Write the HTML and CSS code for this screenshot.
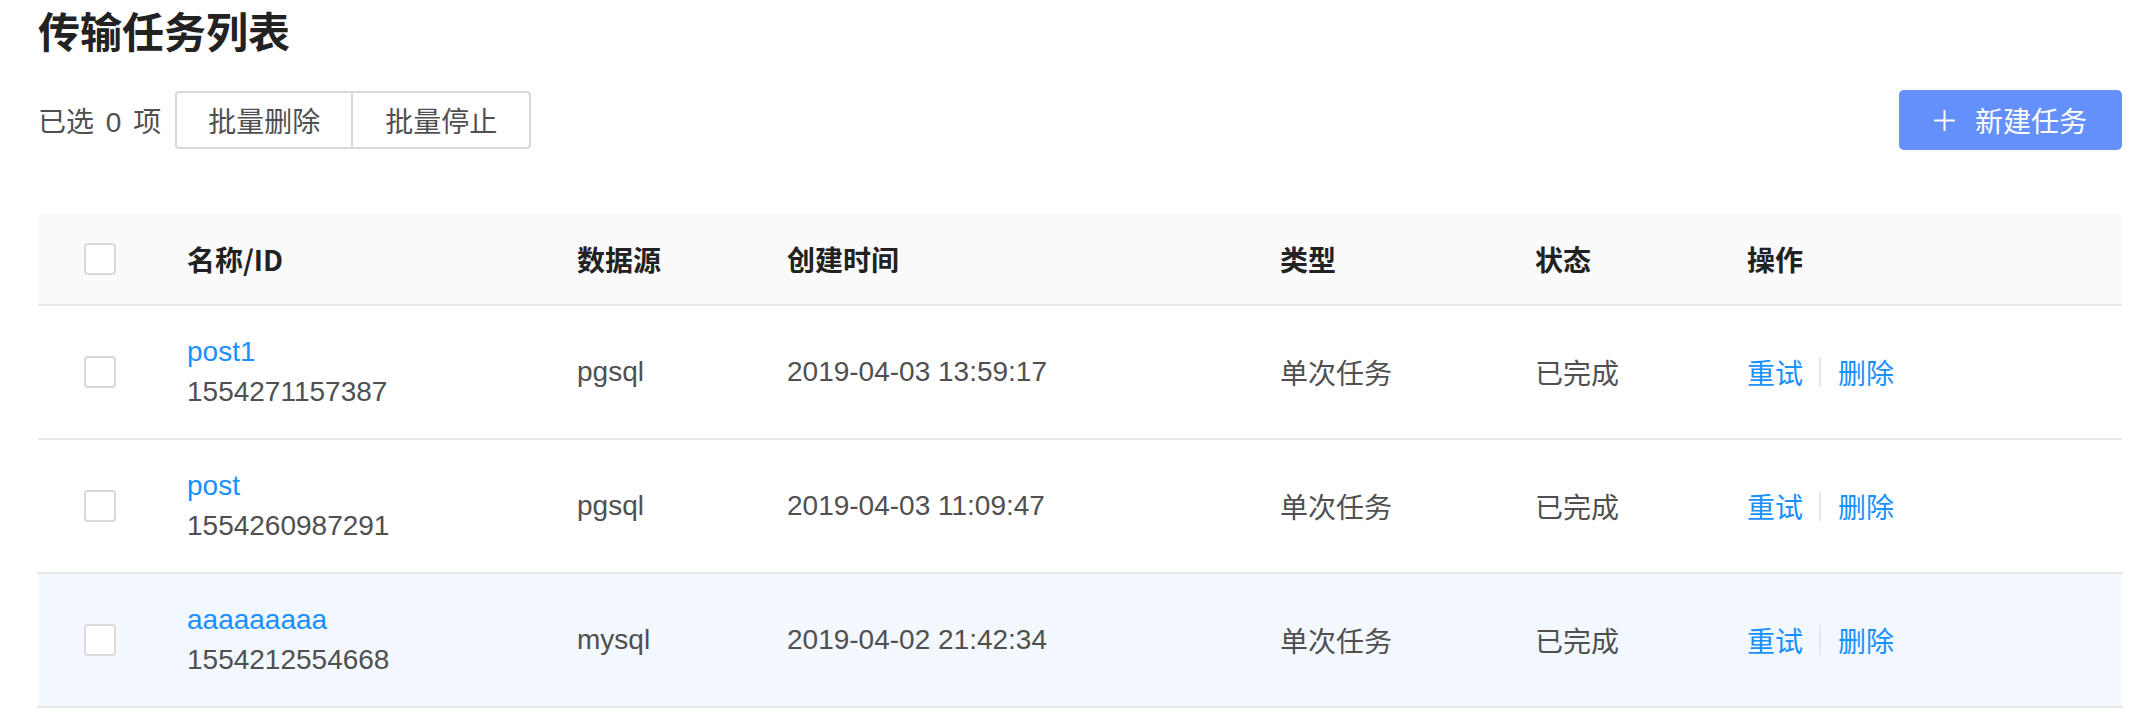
FILE: index.html
```html
<!DOCTYPE html>
<html lang="zh-CN">
<head>
<meta charset="utf-8">
<title>传输任务列表</title>
<link rel="stylesheet" href="styles.css">
</head>
<body>
<div class="page">
  <h1 class="title">传输任务列表</h1>
  <div class="toolbar">
    <div class="selection">
      <span class="selected">已选 0 项</span>
      <div class="btn-group">
        <button class="btn">批量删除</button>
        <button class="btn">批量停止</button>
      </div>
    </div>
    <button class="btn-primary">
      <svg class="plus" width="21" height="21" viewBox="0 0 21 21"><path d="M10.5 0v21M0 10.5h21" stroke="#fff" stroke-width="2" fill="none"/></svg>
      <span>新建任务</span>
    </button>
  </div>

  <div class="table">
    <div class="row head">
      <div class="cell check"><span class="checkbox"></span></div>
      <div class="cell">名称/ID</div>
      <div class="cell">数据源</div>
      <div class="cell">创建时间</div>
      <div class="cell">类型</div>
      <div class="cell">状态</div>
      <div class="cell">操作</div>
    </div>
    <div class="row">
      <div class="cell check"><span class="checkbox"></span></div>
      <div class="cell name"><a class="link">post1</a><span>1554271157387</span></div>
      <div class="cell">pgsql</div>
      <div class="cell">2019-04-03 13:59:17</div>
      <div class="cell">单次任务</div>
      <div class="cell">已完成</div>
      <div class="cell actions"><a class="link">重试</a><span class="sep"></span><a class="link">删除</a></div>
    </div>
    <div class="row">
      <div class="cell check"><span class="checkbox"></span></div>
      <div class="cell name"><a class="link">post</a><span>1554260987291</span></div>
      <div class="cell">pgsql</div>
      <div class="cell">2019-04-03 11:09:47</div>
      <div class="cell">单次任务</div>
      <div class="cell">已完成</div>
      <div class="cell actions"><a class="link">重试</a><span class="sep"></span><a class="link">删除</a></div>
    </div>
    <div class="row hover">
      <div class="cell check"><span class="checkbox"></span></div>
      <div class="cell name"><a class="link">aaaaaaaaa</a><span>1554212554668</span></div>
      <div class="cell">mysql</div>
      <div class="cell">2019-04-02 21:42:34</div>
      <div class="cell">单次任务</div>
      <div class="cell">已完成</div>
      <div class="cell actions"><a class="link">重试</a><span class="sep"></span><a class="link">删除</a></div>
    </div>
  </div>
</div>
</body>
</html>
```
FILE: styles.css
```css
* { box-sizing: border-box; }
html, body { margin: 0; padding: 0; background: #fff; }
body {
  font-family: "Liberation Sans", "Noto Sans CJK SC", sans-serif;
  font-size: 28px;
  color: #505050;
}
.page {
  padding: 0 20px 0 38px;
}
.title {
  margin: 0;
  font-family: "Noto Sans CJK SC", sans-serif;
  font-size: 42px;
  line-height: 60px;
  font-weight: 700;
  color: #222;
}
.toolbar {
  margin-top: 30px;
  height: 60px;
  display: flex;
  align-items: center;
  justify-content: space-between;
}
.selection {
  display: flex;
  align-items: center;
  gap: 14px;
}
.selected {
  word-spacing: 4px;
}
.btn-group {
  display: flex;
  height: 58px;
}
.btn {
  height: 58px;
  font: inherit;
  color: #505050;
  background: #fff;
  border: 2px solid #d9d9d9;
  padding: 0 31px;
  cursor: pointer;
}
.btn:first-child { border-radius: 4px 0 0 4px; }
.btn:last-child { border-left: none; border-radius: 0 4px 4px 0; padding: 0 32px; }
.btn-primary {
  height: 60px;
  display: flex;
  align-items: center;
  gap: 20px;
  padding: 0 35px;
  background: #6390fb;
  color: #fff;
  border: none;
  border-radius: 5px;
  font: inherit;
  font-size: 28px;
}
.plus { display: block; }
.table {
  margin-top: 64px;
}
.row {
  display: grid;
  grid-template-columns: 149px 390px 210px 493px 255px 212px 1fr;
  height: 134px;
  border-bottom: 2px solid #e8e8e8;
}
.row.head {
  height: 92px;
  background: #fafafa;
  border-radius: 6px 6px 0 0;
  font-weight: 700;
  color: #222;
}
.row.head .cell { font-family: "Noto Sans CJK SC", sans-serif; font-weight: 700; }
.row.hover { background: #f3f7fe; }
.cell {
  display: flex;
  align-items: center;
  white-space: nowrap;
}
.cell.check { padding-left: 46px; }
.checkbox {
  display: block;
  width: 32px;
  height: 32px;
  border: 2px solid #d9d9d9;
  border-radius: 4px;
  background: #fff;
}
.cell.name {
  flex-direction: column;
  align-items: flex-start;
  justify-content: center;
  line-height: 40px;
}
.link { color: #1890ff; text-decoration: none; }
.sep {
  display: block;
  width: 2px;
  height: 30px;
  background: #e8e8e8;
  margin: 0 17px 0 16px;
}
```
